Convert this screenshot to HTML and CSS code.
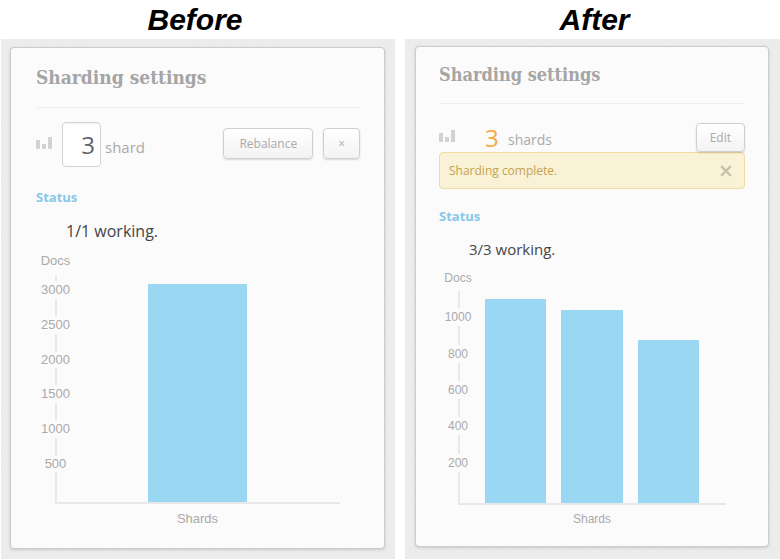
FILE: index.html
```html
<!DOCTYPE html>
<html lang="en">
<head>
<meta charset="utf-8">
<title>Sharding settings</title>
<link rel="stylesheet" href="styles.css">
</head>
<body>
<main class="compare">
  <section class="state before">
    <h1 class="caption">Before</h1>
    <div class="backdrop">
      <article class="card">
        <h2 class="title">Sharding settings</h2>
        <form class="controls">
          <svg class="icon" viewBox="0 0 16 12" aria-hidden="true"><path d="M0 3h4v9H0zM6 7h4v5H6zM12 0h4v12h-4z"/></svg>
          <input class="count" id="shards" type="text" value="3">
          <label class="unit" for="shards">shard</label>
          <button class="button" type="submit">Rebalance</button>
          <button class="button cancel" type="button" aria-label="Cancel">×</button>
        </form>
        <h3 class="status">Status</h3>
        <p class="working">1/1 working.</p>
        <figure class="chart">
          <div class="y-title">Docs</div>
          <div class="plot">
            <ol class="ticks"><li><span>3000</span></li><li><span>2500</span></li><li><span>2000</span></li><li><span>1500</span></li><li><span>1000</span></li><li><span>500</span></li></ol>
            <div class="bars"><div class="bar" style="height:95%"></div></div>
          </div>
          <figcaption class="x-title">Shards</figcaption>
        </figure>
      </article>
    </div>
  </section>
  <section class="state after">
    <h1 class="caption">After</h1>
    <div class="backdrop">
      <article class="card">
        <h2 class="title">Sharding settings</h2>
        <div class="controls">
          <svg class="icon" viewBox="0 0 16 12" aria-hidden="true"><path d="M0 3h4v9H0zM6 7h4v5H6zM12 0h4v12h-4z"/></svg>
          <span class="count">3</span>
          <span class="unit">shards</span>
          <button class="button" type="button">Edit</button>
        </div>
        <div class="alert" role="status">
          <span>Sharding complete.</span>
          <button class="close" type="button" aria-label="Close"><svg viewBox="0 0 10 10" aria-hidden="true"><path d="M1 1l8 8M9 1L1 9"/></svg></button>
        </div>
        <h3 class="status">Status</h3>
        <p class="working">3/3 working.</p>
        <figure class="chart">
          <div class="y-title">Docs</div>
          <div class="plot">
            <ol class="ticks"><li><span>1000</span></li><li><span>800</span></li><li><span>600</span></li><li><span>400</span></li><li><span>200</span></li></ol>
            <div class="bars"><div class="bar" style="height:96%"></div><div class="bar" style="height:91%"></div><div class="bar" style="height:77%"></div></div>
          </div>
          <figcaption class="x-title">Shards</figcaption>
        </figure>
      </article>
    </div>
  </section>
</main>
</body>
</html>
```
FILE: styles.css
```css
* { box-sizing: border-box; }

body {
  margin: 0;
  background: #fff;
  color: #aaa;
  font-family: "Open Sans", "Noto Sans", sans-serif;
}

h1, h2, h3, p, figure, ol { margin: 0; padding: 0; }

.compare {
  display: grid;
  grid-template-columns: 394fr 375fr;
  gap: 10px;
  padding-left: 1px;
}

.state {
  display: flex;
  flex-direction: column;
}

.caption {
  height: 39px;
  color: #000;
  font: italic bold 30px/40px "Liberation Sans", Arial, sans-serif;
  text-align: center;
}

.before .caption { padding-right: 6px; }
.after .caption { padding-left: 4px; }

.backdrop {
  flex: 1;
  padding: 8px 10px 10px 9px;
  background: repeating-linear-gradient(135deg, #ebebeb 0 2px, #ededed 2px 4px);
}

.after .backdrop { padding: 7px 11px 12px 10px; }

.card {
  padding: 17px 24px 21px 25px;
  border: 1px solid #ccc;
  border-radius: 4px;
  background: #fbfbfb;
  box-shadow: 0 1px 3px rgba(0, 0, 0, 0.15);
}

.after .card { padding: 16px 23px 19px; }

.title {
  padding-bottom: 18px;
  border-bottom: 1px solid #eee;
  color: #a5a5a5;
  font: bold 19px/24px "DejaVu Serif Condensed", "DejaVu Serif", serif;
}

.after .title {
  padding-bottom: 16px;
  font-size: 18px;
}

.controls {
  display: flex;
  align-items: center;
  margin-top: 14px;
}

.after .controls { margin-top: 19px; }

.icon {
  width: 16px;
  height: 12px;
  margin: 0 10px 3px 0;
  fill: #d2d2d2;
}

.count {
  width: 39px;
  font-size: 24px;
}

input.count {
  height: 45px;
  padding: 0 5px 0 0;
  border: 1px solid #d4d4d4;
  border-radius: 4px;
  background: #fff;
  color: #5f6470;
  font-family: inherit;
  text-align: right;
  box-shadow: inset 0 1px 1px rgba(0, 0, 0, 0.05);
}

span.count {
  padding-left: 20px;
  color: #f9a73e;
  line-height: 29px;
}

.unit {
  margin-right: auto;
  padding: 5px 0 0 4px;
  font-size: 15px;
  line-height: 20px;
}

.after .unit { font-size: 14px; }

.button {
  height: 31px;
  padding: 0 15px;
  border: 1px solid #d0d0d0;
  border-radius: 4px;
  background: linear-gradient(#fff, #f3f3f3);
  color: #aaa;
  font: 12px/20px "Open Sans", "Noto Sans", sans-serif;
  box-shadow: 0 1px 2px rgba(0, 0, 0, 0.14);
}

.after .button {
  height: 29px;
  padding: 0 13px;
}

.before .button { margin-bottom: 2px; }

.button.cancel {
  margin-left: 10px;
  padding: 0 14px;
}

.alert {
  display: flex;
  align-items: center;
  justify-content: space-between;
  height: 37px;
  padding: 0 12px 0 9px;
  border: 1px solid #f2dca4;
  border-radius: 4px;
  background: #faf2d6;
  color: #c4a250;
  font-size: 12px;
}

.close {
  display: flex;
  padding: 0;
  border: 0;
  background: none;
}

.close svg {
  width: 12px;
  height: 12px;
  fill: none;
  stroke: #c8c1ab;
  stroke-width: 2;
}

.status {
  margin-top: 20px;
  color: #85c9e8;
  font-size: 13px;
  line-height: 20px;
}

.after .status { margin-top: 17px; }

.working {
  margin-top: 12px;
  padding-left: 30px;
  color: #444;
  font-size: 16px;
  line-height: 24px;
}

.after .working {
  margin-top: 11px;
  font-size: 15px;
}

.chart {
  margin: 10px 20px 0 0;
  font: 13px/16px "Liberation Sans", Arial, sans-serif;
}

.after .chart {
  margin-top: 9px;
  margin-right: 19px;
  font-size: 12px;
}

.y-title {
  width: 39px;
  text-align: center;
}

.plot {
  position: relative;
  display: flex;
  height: 231px;
  margin-top: 4px;
}

.after .plot {
  height: 214px;
  margin-top: 5px;
}

/* vertical and horizontal axis lines */
.plot::before {
  content: "";
  position: absolute;
  inset: 3px 0 0 19px;
  border: solid #e8e8e8;
  border-width: 0 0 2px 2px;
}

.after .plot::before { top: 0; }

.ticks {
  position: relative;
  display: grid;
  grid-auto-rows: 1fr;
  width: 39px;
  padding-bottom: 23px;
  list-style: none;
}

.ticks li {
  display: grid;
  place-items: center;
}

.ticks span {
  padding: 1px 0;
  background: #fbfbfb;
}

.bars {
  position: relative;
  display: flex;
  flex: 1;
  align-items: flex-end;
  justify-content: center;
  padding: 0 93px 2px 73px;
}

.bar {
  flex: 1;
  background: #9ad7f3;
}

.after .y-title,
.after .ticks { width: 38px; }

.after .ticks { padding: 8px 0 24px; }

.after .bars {
  gap: 15px;
  padding: 0 27px 2px 8px;
}

.x-title {
  margin: 7px 0 0 19px;
  text-align: center;
}

.after .x-title { margin-top: 6px; }
```
